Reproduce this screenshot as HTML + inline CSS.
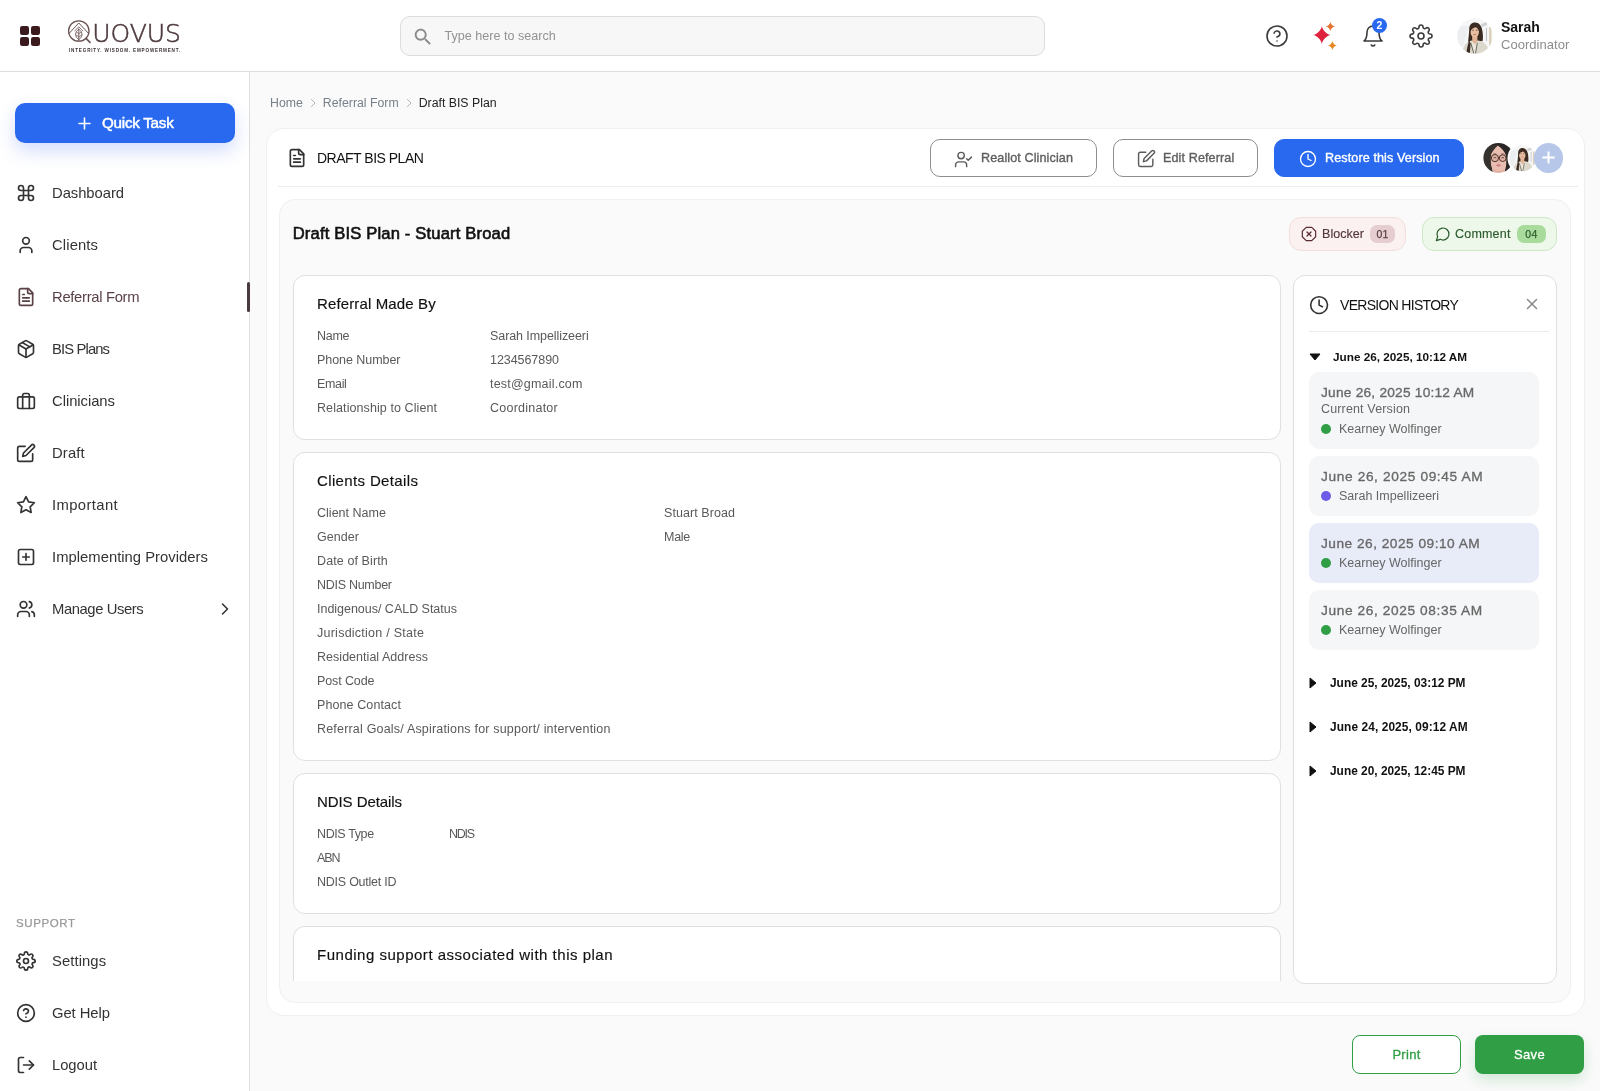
<!DOCTYPE html>
<html lang="en">
<head>
<meta charset="utf-8">
<title>Draft BIS Plan</title>
<style>
*{box-sizing:border-box;margin:0;padding:0}
body{will-change:transform}
html,body{width:1600px;height:1091px;overflow:hidden;background:#fafafa;font-family:"Liberation Sans",sans-serif;color:#1a1a1a}
.abs{position:absolute}
svg{display:block}
.ic{fill:none;stroke:#333;stroke-width:2;stroke-linecap:round;stroke-linejoin:round}
/* header */
#hdr{position:absolute;left:0;top:0;width:1600px;height:72px;background:#fff;border-bottom:1px solid #dedede}
#search{position:absolute;left:400px;top:16px;width:645px;height:40px;border:1px solid #dcdcdc;border-radius:10px;background:#f7f7f7}
#search span{position:absolute;left:43.5px;top:11.5px;font-size:12.6px;color:#929292;letter-spacing:0;white-space:nowrap}
/* sidebar */
#side{position:absolute;left:0;top:72px;width:250px;height:1019px;background:#fff;border-right:1px solid #dedede}
#quick{position:absolute;left:15px;top:31px;width:220px;height:40px;border-radius:10px;background:#2869f0;color:#fff;box-shadow:0 8px 18px rgba(60,100,240,.22)}
#quick span{position:absolute;left:87px;top:11px;font-size:15.2px;-webkit-text-stroke:.5px #fff;letter-spacing:-.25px}
.nav{position:absolute;left:0;width:249px;height:24px}
.nav svg{position:absolute;left:16px;top:2px;width:20px;height:20px}
.nav span{position:absolute;left:52px;top:4px;font-size:14.8px;color:#333;white-space:nowrap}
.nav.act span{color:#5a4146}
.nav.act .ic{stroke:#5a4146}
/* main */
#bc{position:absolute;left:270px;top:96px;font-size:12.3px;color:#76808a;white-space:nowrap}
#card{position:absolute;left:266px;top:128px;width:1319px;height:888px;background:#fff;border:1px solid #f0f0f0;border-radius:18px}
#panel{position:absolute;left:278.5px;top:199px;width:1292.5px;height:804px;background:#fafafa;border:1px solid #f0f0f0;border-radius:16px}
.sec{position:absolute;left:293px;width:988px;background:#fff;border:1px solid #e0e0e0;border-radius:12px}
.sec h3{position:absolute;left:23px;top:19.4px;font-size:15px;font-weight:normal;color:#111;white-space:nowrap;-webkit-text-stroke:.15px #111}
.row{position:absolute;left:23px;font-size:12.5px;color:#595959;white-space:nowrap;letter-spacing:.05px}
.row b{position:absolute;top:0;font-weight:normal}
.btn{position:absolute;height:38px;border-radius:10px;border:1px solid #8e8e8e;background:#fff;font-size:12.6px;color:#5e5e5e}
.btn span{position:absolute;top:11px;white-space:nowrap;-webkit-text-stroke:.35px currentColor;letter-spacing:.1px}
.vd{font-size:11.9px;font-weight:bold;color:#111;white-space:nowrap}
.vt{font-size:13.7px;color:#686868;white-space:nowrap;-webkit-text-stroke:.32px #686868}
.vn{font-size:12.5px;color:#666;white-space:nowrap}
</style>
</head>
<body>
<div id="hdr">
  <svg class="abs" style="left:20px;top:26px" width="20" height="20" viewBox="0 0 20 20"><g fill="#3b1a1e"><rect x="0" y="0" width="9" height="9" rx="2.2"/><rect x="11" y="0" width="9" height="9" rx="2.2"/><rect x="0" y="11" width="9" height="9" rx="2.2"/><rect x="11" y="11" width="9" height="9" rx="2.2"/></g></svg>
  <svg class="abs" style="left:64px;top:16px" width="124" height="40" viewBox="0 0 124 40">
<g fill="none" stroke="#6b5454" stroke-width="1.3" stroke-linecap="round" stroke-linejoin="round"><circle cx="14.8" cy="15" r="10.2"/><path d="M22 22.4l4 3.9" stroke-width="1.7"/><path d="M5.2 17.3 L14.8 7 L24.4 17.3" stroke-width="1"/><path d="M10.8 14.8 L14.8 10.8 L18.8 14.8" stroke-width=".8"/><path d="M14.8 25V14.5" stroke-width=".9"/><path d="M14.8 13.2 C10.6 16 10.4 20.5 14.8 23.6 C19.2 20.5 19 16 14.8 13.2Z" stroke-width=".9"/><path d="M14.8 17.6l-2.6-1.7M14.8 17.6l2.6-1.7M14.8 20.8l-2.9-1.9M14.8 20.8l2.9-1.9" stroke-width=".7"/></g>
<text x="28.3" y="25.6" font-family="'DejaVu Sans Light','DejaVu Sans',sans-serif" font-weight="200" font-size="25" letter-spacing="-.05" fill="#4e3a3d" stroke="#4e3a3d" stroke-width=".55">UOVUS</text>
<text x="5" y="35.9" font-family="'Liberation Sans',sans-serif" font-weight="bold" font-size="4.6" letter-spacing=".82" fill="#3a3033">INTEGRITY. WISDOM. EMPOWERMENT.</text>
</svg>
  <div id="search">
    <svg class="abs" style="left:11px;top:9px" width="22" height="22" viewBox="0 0 24 24"><path fill="#8a8a8a" d="M15.5 14h-.79l-.28-.27C15.41 12.59 16 11.11 16 9.5 16 5.91 13.09 3 9.5 3S3 5.91 3 9.5 5.91 16 9.5 16c1.61 0 3.09-.59 4.23-1.57l.27.28v.79l5 4.99L20.49 19l-4.99-5zm-6 0C7.01 14 5 11.99 5 9.5S7.01 5 9.5 5 14 7.01 14 9.5 11.99 14 9.5 14z"/></svg>
    <span>Type here to search</span>
  </div>
  <svg class="abs ic" style="left:1265px;top:24px;stroke:#3a3a3a;stroke-width:1.6" width="24" height="24" viewBox="0 0 24 24"><circle cx="12" cy="12" r="10"/><path d="M9.09 9a3 3 0 0 1 5.83 1c0 2-3 3-3 3"/><path d="M12 17h.01"/></svg>
  <svg class="abs" style="left:1311px;top:20px" width="26" height="32" viewBox="0 0 26 32"><defs><linearGradient id="gr" x1="0" y1="0" x2="1" y2="1"><stop offset="0" stop-color="#e3243c"/><stop offset="1" stop-color="#d9203f"/></linearGradient></defs><path d="M10.87 5.90 C11.37 10.00 15.77 14.40 19.87 14.90 C15.77 15.40 11.37 19.80 10.87 23.90 C10.37 19.80 5.97 15.40 1.87 14.90 C5.97 14.40 10.37 10.00 10.87 5.90Z" fill="url(#gr)"/><path d="M19.35 1.95 C19.65 4.05 21.75 6.15 23.85 6.45 C21.75 6.75 19.65 8.85 19.35 10.95 C19.05 8.85 16.95 6.75 14.85 6.45 C16.95 6.15 19.05 4.05 19.35 1.95Z" fill="#e8702c"/><path d="M21.40 21.00 C21.70 23.05 23.80 25.15 25.85 25.45 C23.80 25.75 21.70 27.85 21.40 29.90 C21.10 27.85 19.00 25.75 16.95 25.45 C19.00 25.15 21.10 23.05 21.40 21.00Z" fill="#e88a22"/></svg>
  <svg class="abs ic" style="left:1361px;top:24px;stroke:#3a3a3a;stroke-width:1.6" width="24" height="24" viewBox="0 0 24 24"><path d="M6 8a6 6 0 0 1 12 0c0 7 3 9 3 9H3s3-2 3-9"/><path d="M10.3 21a1.94 1.94 0 0 0 3.4 0"/></svg>
  <div class="abs" style="left:1372px;top:18px;width:15px;height:15px;border-radius:50%;background:#2869f0;color:#fff;font-size:10.5px;font-weight:bold;text-align:center;line-height:15px">2</div>
  <svg class="abs ic" style="left:1409.1px;top:24px;stroke:#3a3a3a;stroke-width:1.6" width="24" height="24" viewBox="0 0 24 24"><circle cx="12" cy="12" r="3"/><path d="M19.4 15a1.65 1.65 0 0 0 .33 1.82l.06.06a2 2 0 0 1 0 2.83 2 2 0 0 1-2.83 0l-.06-.06a1.65 1.65 0 0 0-1.82-.33 1.65 1.65 0 0 0-1 1.51V21a2 2 0 0 1-2 2 2 2 0 0 1-2-2v-.09A1.65 1.65 0 0 0 9 19.4a1.65 1.65 0 0 0-1.82.33l-.06.06a2 2 0 0 1-2.83 0 2 2 0 0 1 0-2.83l.06-.06a1.65 1.65 0 0 0 .33-1.82 1.65 1.65 0 0 0-1.51-1H3a2 2 0 0 1-2-2 2 2 0 0 1 2-2h.09A1.65 1.65 0 0 0 4.6 9a1.65 1.65 0 0 0-.33-1.82l-.06-.06a2 2 0 0 1 0-2.83 2 2 0 0 1 2.83 0l.06.06a1.65 1.65 0 0 0 1.82.33H9a1.65 1.65 0 0 0 1-1.51V3a2 2 0 0 1 2-2 2 2 0 0 1 2 2v.09a1.65 1.65 0 0 0 1 1.51 1.65 1.65 0 0 0 1.82-.33l.06-.06a2 2 0 0 1 2.83 0 2 2 0 0 1 0 2.83l-.06.06a1.65 1.65 0 0 0-.33 1.82V9a1.65 1.65 0 0 0 1.51 1H21a2 2 0 0 1 2 2 2 2 0 0 1-2 2h-.09a1.65 1.65 0 0 0-1.51 1z"/></svg>
  <svg class="abs" style="left:1457px;top:18px" width="36" height="36" viewBox="0 0 36 36"><defs><clipPath id="c1"><circle cx="18" cy="18" r="17.8"/></clipPath><filter id="bl" x="-10%" y="-10%" width="120%" height="120%"><feGaussianBlur stdDeviation=".45"/></filter></defs><g clip-path="url(#c1)"><g filter="url(#bl)"><g><rect width="36" height="36" fill="#f6f6f6"/><path d="M0 8h12l-6 20H0z" fill="#eceef0"/><rect x="32.2" y="9" width="2.2" height="18.5" fill="#d9cdb4"/><rect x="29" y="10" width=".9" height="13" fill="#b9bcc0"/><path d="M24 6l6-2v3l-5 2z" fill="#cfd2d5"/><path d="M12.2 12 C12 6.5 15 4.4 18 4.5 C22 4.6 24.6 7.5 25.4 13 C26 17 26.2 20 25.6 23 L21 24 L14 25 L12.8 36 L9.2 36 C10.5 28 11.8 20 12.2 12Z" fill="#3b2a22"/><path d="M4.5 36 C6 27.5 10 23.5 14.6 22.6 L21.2 22.4 C27 23.4 31 27 32.8 36Z" fill="#dcd8cc"/><path d="M14.2 23.5 C15.5 26 16.5 30 17 36 L19 36 C19.2 30 20 26 21.4 23 Z" fill="#ebe7de"/><path d="M15.2 18h5.2v5.2l-2.4 3.2-2.8-3.2z" fill="#e2b596"/><ellipse cx="17.7" cy="13.6" rx="4.3" ry="5.8" fill="#e8bea2"/><path d="M13 14.5 C12.6 9 15 7.2 17.6 7.2 C20.6 7.2 22.8 9 22.6 14.5 C21.6 11.2 20 9.6 18.6 9.2 C16.5 9.6 14 11 13 14.5Z" fill="#3b2a22"/><path d="M15.3 12.2h1.6M18.9 12.2h1.6" stroke="#3a2620" stroke-width=".7"/><path d="M16.6 16.6h2.3" stroke="#b5605a" stroke-width=".9"/><path d="M13.7 24.8L16.8 35.5M20.3 24.8L18.5 35.5" stroke="#4c4a40" stroke-width=".8" fill="none"/><path d="M9.2 36 C10 30 11 26 12.3 22 L13.6 26 L12.8 36Z" fill="#3b2a22"/></g></g></g></svg>
  <div class="abs" id="nm" style="left:1501px;top:19px;font-size:14px;font-weight:bold;color:#111">Sarah</div>
  <div class="abs" id="rl" style="left:1501px;top:37px;font-size:13px;color:#8c8c8c;letter-spacing:.03px">Coordinator</div>
</div>
<div id="side">
  <div id="quick"><svg class="abs" style="left:63px;top:14px" width="13" height="13" viewBox="0 0 13 13"><path d="M6.5 1v11M1 6.5h11" stroke="#fff" stroke-width="1.6" stroke-linecap="round"/></svg><span>Quick Task</span></div>
  <div class="nav" style="top:109px"><svg class="ic" viewBox="0 0 24 24"><path d="M15 6v12a3 3 0 1 0 3-3H6a3 3 0 1 0 3 3V6a3 3 0 1 0-3 3h12a3 3 0 1 0-3-3"/></svg><span style="letter-spacing:-0.05px">Dashboard</span></div>
  <div class="nav" style="top:161px"><svg class="ic" viewBox="0 0 24 24"><path d="M19 21v-2a4 4 0 0 0-4-4H9a4 4 0 0 0-4 4v2"/><circle cx="12" cy="7" r="4"/></svg><span style="letter-spacing:0.13px">Clients</span></div>
  <div class="nav act" style="top:213px"><svg class="ic" viewBox="0 0 24 24"><path d="M15 2H6a2 2 0 0 0-2 2v16a2 2 0 0 0 2 2h12a2 2 0 0 0 2-2V7Z"/><path d="M14 2v4a2 2 0 0 0 2 2h4"/><path d="M10 9H8"/><path d="M16 13H8"/><path d="M16 17H8"/></svg><span style="letter-spacing:-0.31px">Referral Form</span></div>
  <div class="nav" style="top:265px"><svg class="ic" viewBox="0 0 24 24"><path d="M21 8a2 2 0 0 0-1-1.73l-7-4a2 2 0 0 0-2 0l-7 4A2 2 0 0 0 3 8v8a2 2 0 0 0 1 1.73l7 4a2 2 0 0 0 2 0l7-4A2 2 0 0 0 21 16Z"/><path d="m3.3 7 8.7 5 8.7-5"/><path d="M12 22V12"/><path d="m7.5 4.27 9 5.15"/></svg><span style="letter-spacing:-0.87px">BIS Plans</span></div>
  <div class="nav" style="top:317px"><svg class="ic" viewBox="0 0 24 24"><rect width="20" height="14" x="2" y="7" rx="2" ry="2"/><path d="M16 21V5a2 2 0 0 0-2-2h-4a2 2 0 0 0-2 2v16"/></svg><span style="letter-spacing:-0.04px">Clinicians</span></div>
  <div class="nav" style="top:369px"><svg class="ic" viewBox="0 0 24 24"><path d="M11 4H4a2 2 0 0 0-2 2v14a2 2 0 0 0 2 2h14a2 2 0 0 0 2-2v-7"/><path d="M18.5 2.5a2.121 2.121 0 0 1 3 3L12 15l-4 1 1-4 9.5-9.5z"/></svg><span style="letter-spacing:0.16px">Draft</span></div>
  <div class="nav" style="top:421px"><svg class="ic" viewBox="0 0 24 24"><polygon points="12 2 15.09 8.26 22 9.27 17 14.14 18.18 21.02 12 17.77 5.82 21.02 7 14.14 2 9.27 8.91 8.26 12 2"/></svg><span style="letter-spacing:0.4px">Important</span></div>
  <div class="nav" style="top:473px"><svg class="ic" viewBox="0 0 24 24"><rect width="18" height="18" x="3" y="3" rx="2"/><path d="M8 12h8"/><path d="M12 8v8"/></svg><span style="letter-spacing:0.02px">Implementing Providers</span></div>
  <div class="nav" style="top:525px"><svg class="ic" viewBox="0 0 24 24"><path d="M16 21v-2a4 4 0 0 0-4-4H6a4 4 0 0 0-4 4v2"/><circle cx="9" cy="7" r="4"/><path d="M22 21v-2a4 4 0 0 0-3-3.87"/><path d="M16 3.13a4 4 0 0 1 0 7.75"/></svg><span style="letter-spacing:-0.42px">Manage Users</span></div>
  <div class="nav" style="top:877px"><svg class="ic" style="left:16.1px;top:2.2px;width:20px;height:20px" viewBox="0 0 24 24"><circle cx="12" cy="12" r="3"/><path d="M19.4 15a1.65 1.65 0 0 0 .33 1.82l.06.06a2 2 0 0 1 0 2.83 2 2 0 0 1-2.83 0l-.06-.06a1.65 1.65 0 0 0-1.82-.33 1.65 1.65 0 0 0-1 1.51V21a2 2 0 0 1-2 2 2 2 0 0 1-2-2v-.09A1.65 1.65 0 0 0 9 19.4a1.65 1.65 0 0 0-1.82.33l-.06.06a2 2 0 0 1-2.83 0 2 2 0 0 1 0-2.83l.06-.06a1.65 1.65 0 0 0 .33-1.82 1.65 1.65 0 0 0-1.51-1H3a2 2 0 0 1-2-2 2 2 0 0 1 2-2h.09A1.65 1.65 0 0 0 4.6 9a1.65 1.65 0 0 0-.33-1.82l-.06-.06a2 2 0 0 1 0-2.83 2 2 0 0 1 2.83 0l.06.06a1.65 1.65 0 0 0 1.82.33H9a1.65 1.65 0 0 0 1-1.51V3a2 2 0 0 1 2-2 2 2 0 0 1 2 2v.09a1.65 1.65 0 0 0 1 1.51 1.65 1.65 0 0 0 1.82-.33l.06-.06a2 2 0 0 1 2.83 0 2 2 0 0 1 0 2.83l-.06.06a1.65 1.65 0 0 0-.33 1.82V9a1.65 1.65 0 0 0 1.51 1H21a2 2 0 0 1 2 2 2 2 0 0 1-2 2h-.09a1.65 1.65 0 0 0-1.51 1z"/></svg><span style="letter-spacing:0.08px">Settings</span></div>
  <div class="nav" style="top:929px"><svg class="ic" viewBox="0 0 24 24"><circle cx="12" cy="12" r="10"/><path d="M9.09 9a3 3 0 0 1 5.83 1c0 2-3 3-3 3"/><path d="M12 17h.01"/></svg><span style="letter-spacing:-0.06px">Get Help</span></div>
  <div class="nav" style="top:981px"><svg class="ic" viewBox="0 0 24 24"><path d="M9 21H5a2 2 0 0 1-2-2V5a2 2 0 0 1 2-2h4"/><polyline points="16 17 21 12 16 7"/><line x1="21" x2="9" y1="12" y2="12"/></svg><span style="letter-spacing:-0.05px">Logout</span></div>
  <svg class="abs ic" style="left:214.5px;top:527px;stroke-width:1.9" width="20" height="20" viewBox="0 0 24 24"><path d="m9 18 6-6-6-6"/></svg>
  <div class="abs" style="left:247px;top:210px;width:3px;height:30px;background:#4a3a3d;border-radius:2px"></div>
  <div class="abs" style="left:16px;top:845px;font-size:11.5px;color:#999;letter-spacing:.62px;-webkit-text-stroke:.25px #999">SUPPORT</div>
</div>
<div id="bc"><span>Home</span><svg class="ic" style="display:inline-block;vertical-align:-2px;margin:0 4px;stroke:#9aa1a8;stroke-width:1.6" width="12" height="12" viewBox="0 0 24 24"><path d="m9 19 7-7-7-7"/></svg><span>Referral Form</span><svg class="ic" style="display:inline-block;vertical-align:-2px;margin:0 4px;stroke:#9aa1a8;stroke-width:1.6" width="12" height="12" viewBox="0 0 24 24"><path d="m9 19 7-7-7-7"/></svg><span style="color:#222">Draft BIS Plan</span></div>
<div id="card"></div>
<div id="panel"></div>
<svg class="abs ic" style="left:287px;top:148px" width="20" height="20" viewBox="0 0 24 24"><path d="M15 2H6a2 2 0 0 0-2 2v16a2 2 0 0 0 2 2h12a2 2 0 0 0 2-2V7Z"/><path d="M14 2v4a2 2 0 0 0 2 2h4"/><path d="M10 9H8"/><path d="M16 13H8"/><path d="M16 17H8"/></svg>
<div class="abs" id="ttl" style="left:317px;top:150px;font-size:14px;letter-spacing:-.5px;color:#111;white-space:nowrap">DRAFT BIS PLAN</div>
<div class="abs" style="left:278px;top:186px;width:1300px;height:1px;background:#ececec"></div>
<div class="btn" style="left:929.5px;top:139px;width:167px"><svg class="abs ic" style="left:23px;top:10px;stroke:#5b5b5b;stroke-width:1.8" width="19" height="19" viewBox="0 0 24 24"><path d="M16 21v-2a4 4 0 0 0-4-4H6a4 4 0 0 0-4 4v2"/><circle cx="9" cy="7" r="4"/><polyline points="16 11 18 13 22 9"/></svg><span style="left:50.5px">Reallot Clinician</span></div>
<div class="btn" style="left:1112.5px;top:139px;width:145px"><svg class="abs ic" style="left:23px;top:9px;stroke:#5b5b5b;stroke-width:1.8" width="19" height="19" viewBox="0 0 24 24"><path d="M11 4H4a2 2 0 0 0-2 2v14a2 2 0 0 0 2 2h14a2 2 0 0 0 2-2v-7"/><path d="M18.5 2.5a2.121 2.121 0 0 1 3 3L12 15l-4 1 1-4 9.5-9.5z"/></svg><span style="left:49.5px">Edit Referral</span></div>
<div class="btn" style="left:1273.5px;top:139px;width:190px;background:#2869f0;border-color:#2869f0;color:#fff"><svg class="abs ic" style="left:24px;top:10px;stroke:#fff;stroke-width:1.8" width="18" height="18" viewBox="0 0 24 24"><circle cx="12" cy="12" r="10"/><polyline points="12 6 12 12 16 14"/></svg><span style="left:50.5px">Restore this Version</span></div>
<svg class="abs" style="left:1482px;top:142px" width="32" height="32" viewBox="0 0 32 32"><defs><clipPath id="c2"><circle cx="16.4" cy="15.95" r="15"/></clipPath></defs><g clip-path="url(#c2)"><g filter="url(#bl)"><rect width="32" height="32" fill="#2c2827"/><path d="M15.8 3.4 C12 5 9 9 8.7 13 C8.2 18 8.4 23 11 30.5 L11.5 32 H22 L22.6 30 C24.6 24 24.8 19 24.2 14 C23.6 9 20 5 15.8 3.4Z" fill="#e9beb0"/><path d="M11.5 27 C13 29.5 19.5 29.8 22.3 27 L22.6 32 H11Z" fill="#dfae9f"/><path d="M2 8 C6 3 12 2.4 15.8 3.4 C13 6 10.5 9 9 12.5 C8.3 16 8.4 22 10.2 28 L8 32 L0 32Z" fill="#35302e"/><path d="M15.8 3.4 C20 2.6 26 4 30 9 L32 32 L23 31 C24.8 25 25 18 24.2 13.5 C22.8 9.5 19.5 6 15.8 3.4Z" fill="#2c2827"/><g fill="rgba(130,80,70,.10)" stroke="#4e3029" stroke-width="1"><circle cx="12.9" cy="16.1" r="3.6"/><circle cx="20.7" cy="16.1" r="3.4"/></g><path d="M16.5 15.6h.8M9.3 15.5l-1-.5M24.1 15.5l1-.4" stroke="#4e3029" stroke-width=".9"/><path d="M11.6 16c.8-.6 1.8-.6 2.6 0M19.5 16c.8-.6 1.8-.6 2.6 0" stroke="#2a1a18" stroke-width=".8" fill="none"/><path d="M11 12.2c1.2-.6 2.6-.6 3.6-.1M19 12.1c1-.5 2.4-.5 3.6.1" stroke="#5a463f" stroke-width=".6" fill="none"/><path d="M13.8 23.2 C15.2 22 17.8 22 19.2 23.2 C17.8 24.8 15.2 24.8 13.8 23.2Z" fill="#cf7f84"/><path d="M15.5 20.3c.6.4 1.400.4 2 0" stroke="#d29c8e" stroke-width=".7" fill="none"/></g></g></svg>
<svg class="abs" style="left:1507px;top:143px" width="31" height="31" viewBox="0 0 31 31"><defs><clipPath id="c3"><circle cx="15.5" cy="15.2" r="13.2"/></clipPath></defs><circle cx="15.5" cy="15.2" r="15" fill="#fff"/><g clip-path="url(#c3)"><g transform="translate(2.1,1.6) scale(.745)"><g filter="url(#bl)"><g><rect width="36" height="36" fill="#f6f6f6"/><path d="M0 8h12l-6 20H0z" fill="#eceef0"/><rect x="32.2" y="9" width="2.2" height="18.5" fill="#d9cdb4"/><rect x="29" y="10" width=".9" height="13" fill="#b9bcc0"/><path d="M24 6l6-2v3l-5 2z" fill="#cfd2d5"/><path d="M12.2 12 C12 6.5 15 4.4 18 4.5 C22 4.6 24.6 7.5 25.4 13 C26 17 26.2 20 25.6 23 L21 24 L14 25 L12.8 36 L9.2 36 C10.5 28 11.8 20 12.2 12Z" fill="#3b2a22"/><path d="M4.5 36 C6 27.5 10 23.5 14.6 22.6 L21.2 22.4 C27 23.4 31 27 32.8 36Z" fill="#dcd8cc"/><path d="M14.2 23.5 C15.5 26 16.5 30 17 36 L19 36 C19.2 30 20 26 21.4 23 Z" fill="#ebe7de"/><path d="M15.2 18h5.2v5.2l-2.4 3.2-2.8-3.2z" fill="#e2b596"/><ellipse cx="17.7" cy="13.6" rx="4.3" ry="5.8" fill="#e8bea2"/><path d="M13 14.5 C12.6 9 15 7.2 17.6 7.2 C20.6 7.2 22.8 9 22.6 14.5 C21.6 11.2 20 9.6 18.6 9.2 C16.5 9.6 14 11 13 14.5Z" fill="#3b2a22"/><path d="M15.3 12.2h1.6M18.9 12.2h1.6" stroke="#3a2620" stroke-width=".7"/><path d="M16.6 16.6h2.3" stroke="#b5605a" stroke-width=".9"/><path d="M13.7 24.8L16.8 35.5M20.3 24.8L18.5 35.5" stroke="#4c4a40" stroke-width=".8" fill="none"/><path d="M9.2 36 C10 30 11 26 12.3 22 L13.6 26 L12.8 36Z" fill="#3b2a22"/></g></g></g></g></svg>
<div class="abs" style="left:1533.7px;top:143.1px;width:29.8px;height:29.8px;border-radius:50%;background:#b7c7ea"><svg class="abs" style="left:7.4px;top:7.4px" width="15" height="15" viewBox="0 0 15 15"><path d="M7.5 1.4v12.2M1.4 7.5h12.2" stroke="#fff" stroke-width="2" stroke-linecap="butt"/></svg></div>
<div class="abs" id="h1" style="left:292.7px;top:224px;font-size:16.6px;letter-spacing:0.16px;-webkit-text-stroke:.6px #111;color:#111;white-space:nowrap">Draft BIS Plan - Stuart Broad</div>
<div class="abs" style="left:1289px;top:217px;width:117px;height:34px;border-radius:12px;background:#fbf1f1;border:1px solid #f3dddd"><svg class="abs ic" style="left:11px;top:8px;stroke:#5a2d33;stroke-width:1.8" width="16" height="16" viewBox="0 0 24 24"><polygon points="7.86 2 16.14 2 22 7.86 22 16.14 16.14 22 7.86 22 2 16.14 2 7.86 7.86 2"/><path d="m15 9-6 6"/><path d="m9 9 6 6"/></svg><span class="abs" style="left:32px;top:9px;font-size:12.5px;color:#54353a;letter-spacing:.05px;-webkit-text-stroke:.15px #54353a">Blocker</span><span class="abs" style="left:80px;top:7px;width:25px;height:18px;border-radius:7px;background:#e6cdd0;font-size:10.5px;letter-spacing:.2px;color:#5a4146;-webkit-text-stroke:.25px #5a4146;text-align:center;line-height:18px">01</span></div>
<div class="abs" style="left:1422px;top:217px;width:135px;height:34px;border-radius:12px;background:#eef8ea;border:1px solid #cde8c5"><svg class="abs ic" style="left:12px;top:8px;stroke:#2a5a2c;stroke-width:1.8" width="16" height="16" viewBox="0 0 24 24"><path d="M7.9 20A9 9 0 1 0 4 16.1L2 22Z"/></svg><span class="abs" style="left:32px;top:9px;font-size:12.5px;color:#2a5a2c;letter-spacing:.2px;-webkit-text-stroke:.15px #2a5a2c">Comment</span><span class="abs" style="left:94px;top:7px;width:29px;height:18px;border-radius:7px;background:#a9db9d;font-size:10.5px;letter-spacing:.4px;color:#2d5f2e;-webkit-text-stroke:.25px #2d5f2e;text-align:center;line-height:18px">04</span></div>
<div class="sec" style="top:275px;height:165px"><h3 style="letter-spacing:0.13px">Referral Made By</h3><div class="row" style="top:53px"><span style="letter-spacing:-0.28px">Name</span><b style="left:173px;letter-spacing:-0.08px">Sarah Impellizeeri</b></div><div class="row" style="top:77px"><span style="letter-spacing:-0.05px">Phone Number</span><b style="left:173px;letter-spacing:-0.06px">1234567890</b></div><div class="row" style="top:101px"><span style="letter-spacing:-0.34px">Email</span><b style="left:173px;letter-spacing:0.2px">test@gmail.com</b></div><div class="row" style="top:125px"><span style="letter-spacing:0.09px">Relationship to Client</span><b style="left:173px;letter-spacing:0.24px">Coordinator</b></div></div>
<div class="sec" style="top:452px;height:309px"><h3 style="letter-spacing:0.36px">Clients Details</h3><div class="row" style="top:53px"><span style="letter-spacing:0.02px">Client Name</span><b style="left:347px;letter-spacing:0.07px">Stuart Broad</b></div><div class="row" style="top:77px"><span style="letter-spacing:0.02px">Gender</span><b style="left:347px;letter-spacing:-0.27px">Male</b></div><div class="row" style="top:101px"><span style="letter-spacing:0.1px">Date of Birth</span></div><div class="row" style="top:125px"><span style="letter-spacing:-0.28px">NDIS Number</span></div><div class="row" style="top:149px"><span style="letter-spacing:-0.02px">Indigenous/ CALD Status</span></div><div class="row" style="top:173px"><span style="letter-spacing:0.25px">Jurisdiction / State</span></div><div class="row" style="top:197px"><span style="letter-spacing:0.03px">Residential Address</span></div><div class="row" style="top:221px"><span style="letter-spacing:-0.11px">Post Code</span></div><div class="row" style="top:245px"><span style="letter-spacing:0.1px">Phone Contact</span></div><div class="row" style="top:269px"><span style="letter-spacing:0.19px">Referral Goals/ Aspirations for support/ intervention</span></div></div>
<div class="sec" style="top:773px;height:141px"><h3 style="letter-spacing:-0.07px">NDIS Details</h3><div class="row" style="top:53px"><span style="letter-spacing:-0.39px">NDIS Type</span><b style="left:132px;letter-spacing:-1.23px">NDIS</b></div><div class="row" style="top:77px"><span style="letter-spacing:-1.1px">ABN</span></div><div class="row" style="top:101px"><span style="letter-spacing:-0.24px">NDIS Outlet ID</span></div></div>
<div class="sec" style="top:926px;height:55px;border-bottom:none;border-radius:12px 12px 0 0"><h3 style="letter-spacing:0.51px">Funding support associated with this plan</h3></div>
<div class="abs" style="left:1293px;top:275px;width:264px;height:709px;background:#fff;border:1px solid #e0e0e0;border-radius:12px"></div>
<svg class="abs ic" style="left:1308.8px;top:294.7px;stroke:#333;stroke-width:1.9" width="20.2" height="20.2" viewBox="0 0 24 24"><circle cx="12" cy="12" r="10"/><polyline points="12 6 12 12 16 14"/></svg>
<div class="abs" id="vht" style="left:1340px;top:297px;font-size:14px;letter-spacing:-.7px;color:#111;white-space:nowrap">VERSION HISTORY</div>
<svg class="abs ic" style="left:1523px;top:295px;stroke:#8a8a8a;stroke-width:2" width="18" height="18" viewBox="0 0 24 24"><path d="M18 6 6 18"/><path d="m6 6 12 12"/></svg>
<div class="abs" style="left:1309px;top:331px;width:240px;height:1px;background:#ececec"></div>
<svg class="abs" style="left:1309px;top:353px" width="12" height="8" viewBox="0 0 12 8"><path d="M1 1h10L6 7z" fill="#111" stroke="#111" stroke-width="1" stroke-linejoin="round"/></svg>
<div class="abs vd" style="left:1333px;top:350px;font-size:11.75px">June 26, 2025, 10:12 AM</div>
<div class="abs" style="left:1309px;top:372px;width:230px;height:77px;border-radius:10px;background:#f5f6f7"><div class="abs vt" style="left:12px;top:12.6px;letter-spacing:0.23px">June 26, 2025 10:12 AM</div><div class="abs vn" style="left:12px;top:30px;letter-spacing:.15px">Current Version</div><div class="abs" style="left:12px;top:52px;width:10px;height:10px;border-radius:50%;background:#2f9e44"></div><div class="abs vn" style="left:30px;top:50px">Kearney Wolfinger</div></div>
<div class="abs" style="left:1309px;top:456px;width:230px;height:60px;border-radius:10px;background:#f5f6f7"><div class="abs vt" style="left:12px;top:12.6px;letter-spacing:0.63px">June 26, 2025 09:45 AM</div><div class="abs" style="left:12px;top:35px;width:10px;height:10px;border-radius:50%;background:#6c5ce7"></div><div class="abs vn" style="left:30px;top:33px">Sarah Impellizeeri</div></div>
<div class="abs" style="left:1309px;top:523px;width:230px;height:60px;border-radius:10px;background:#e8ebf8"><div class="abs vt" style="left:12px;top:12.6px;letter-spacing:0.49px">June 26, 2025 09:10 AM</div><div class="abs" style="left:12px;top:35px;width:10px;height:10px;border-radius:50%;background:#2f9e44"></div><div class="abs vn" style="left:30px;top:33px">Kearney Wolfinger</div></div>
<div class="abs" style="left:1309px;top:590px;width:230px;height:60px;border-radius:10px;background:#f5f6f7"><div class="abs vt" style="left:12px;top:12.6px;letter-spacing:0.61px">June 26, 2025 08:35 AM</div><div class="abs" style="left:12px;top:35px;width:10px;height:10px;border-radius:50%;background:#2f9e44"></div><div class="abs vn" style="left:30px;top:33px">Kearney Wolfinger</div></div>
<svg class="abs" style="left:1309px;top:677px" width="8" height="12" viewBox="0 0 8 12"><path d="M1 1v10L7 6z" fill="#111" stroke="#111" stroke-width="1" stroke-linejoin="round"/></svg>
<div class="abs vd" style="left:1330px;top:676px">June 25, 2025, 03:12 PM</div>
<svg class="abs" style="left:1309px;top:721px" width="8" height="12" viewBox="0 0 8 12"><path d="M1 1v10L7 6z" fill="#111" stroke="#111" stroke-width="1" stroke-linejoin="round"/></svg>
<div class="abs vd" style="left:1330px;top:720px;letter-spacing:.09px">June 24, 2025, 09:12 AM</div>
<svg class="abs" style="left:1309px;top:765px" width="8" height="12" viewBox="0 0 8 12"><path d="M1 1v10L7 6z" fill="#111" stroke="#111" stroke-width="1" stroke-linejoin="round"/></svg>
<div class="abs vd" style="left:1330px;top:764px">June 20, 2025, 12:45 PM</div>
<div class="abs" style="left:1352px;top:1035px;width:109px;height:39px;border-radius:8px;border:1px solid #2f9e44;background:#fff;color:#2f9e44;-webkit-text-stroke:.3px #2f9e44;font-size:13px;text-align:center;line-height:37px;letter-spacing:.3px">Print</div>
<div class="abs" style="left:1475px;top:1035px;width:109px;height:39px;border-radius:8px;background:#2f9e44;color:#fff;-webkit-text-stroke:.3px #fff;font-size:13px;text-align:center;line-height:39px;letter-spacing:.3px;box-shadow:0 6px 14px rgba(47,158,68,.2)">Save</div>
</body>
</html>
